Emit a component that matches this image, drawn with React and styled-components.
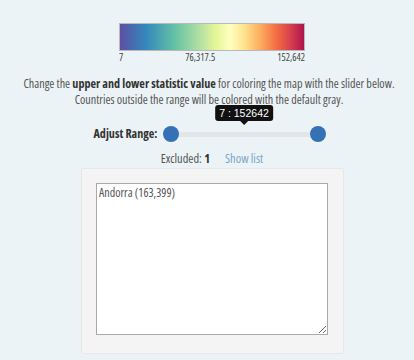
import React from "react";
import styled, { createGlobalStyle } from "styled-components";

const Global = createGlobalStyle`
  html, body { margin: 0; padding: 0; background: #ecf3f6; }
  body {
    font-family: "Open Sans", sans-serif;
    font-stretch: 80%;
    color: #555;
  }
`;

const Page = styled.div`
  width: 414px;
  height: 360px;
  display: flex;
  flex-direction: column;
  align-items: center;
  padding-top: 23px;
  box-sizing: border-box;
  overflow: hidden;
`;

const Legend = styled.div`
  width: 186px;
  margin-left: 10px;
  display: flex;
  flex-direction: column;
`;

const Bar = styled.div`
  height: 26px;
  border: 1px solid #b9b9b9;
  background: linear-gradient(
    to right,
    #5e4fa2 0%,
    #3288bd 14%,
    #66c2a5 30%,
    #abdda4 42%,
    #e6f598 52%,
    #ffffbf 60%,
    #fee08b 68%,
    #fdae61 76%,
    #f46d43 85%,
    #d53e4f 93%,
    #b0124c 100%
  );
`;

const Ticks = styled.div`
  display: flex;
  justify-content: space-between;
  font-size: 10px;
  color: #444;
  line-height: 11px;
  margin-top: 1px;
`;

const Help = styled.p`
  margin: 13px 0 0 4px;
  font-size: 12.1px;
  line-height: 16px;
  text-align: center;
  color: #555;
  white-space: nowrap;
  b { color: #333; font-weight: 700; }
`;

const SliderRow = styled.div`
  display: flex;
  align-items: center;
  gap: 5px;
  margin-top: 17px;
  margin-left: 5px;
`;

const Label = styled.span`
  font-size: 12.1px;
  font-weight: 700;
  color: #333;
`;

const Slider = styled.div`
  position: relative;
  width: 163px;
  height: 16px;
`;

const Track = styled.div`
  position: absolute;
  left: 8px;
  right: 8px;
  top: 6px;
  height: 5px;
  background: #e3e6e7;
  border-radius: 3px;
`;

const Handle = styled.div`
  position: absolute;
  top: 0;
  left: ${(p) => p.$left}px;
  width: 16px;
  height: 16px;
  border-radius: 50%;
  background: #3571b5;
`;

const Tip = styled.div`
  position: absolute;
  left: 50%;
  bottom: 21px;
  transform: translateX(-50%);
  background: #111;
  color: #fff;
  font-family: "Liberation Sans", Arial, sans-serif;
  font-stretch: normal;
  font-size: 10.5px;
  line-height: 14px;
  padding: 1px 4px;
  border-radius: 3px;
  white-space: nowrap;
  &::after {
    content: "";
    position: absolute;
    left: 50%;
    top: 100%;
    margin-left: -4px;
    border: 4px solid transparent;
    border-top-color: #111;
  }
`;

const Excluded = styled.div`
  display: flex;
  gap: 15px;
  margin-top: 10px;
  margin-left: 10px;
  font-size: 12.4px;
  line-height: 14px;
  color: #555;
  b { color: #333; }
`;

const Link = styled.a`
  color: #7aa4c8;
  text-decoration: none;
`;

const Panel = styled.div`
  margin-top: 2px;
  margin-left: 11px;
  width: 233px;
  padding: 14px 14px 18px;
  background: #f4f4f4;
  border: 1px solid #e6e8e9;
  border-radius: 2px;
`;

const Area = styled.textarea`
  display: block;
  width: 232px;
  height: 152px;
  box-sizing: border-box;
  border: 1px solid #a9a9a9;
  background: #fff;
  font-family: "Open Sans", sans-serif;
  font-stretch: 80%;
  font-size: 12px;
  line-height: 15px;
  color: #555;
  padding: 1px 2px;
  margin: 0;
  resize: both;
  outline: none;
`;

export default function App() {
  return (
    <>
      <Global />
      <Page>
        <Legend>
          <Bar />
          <Ticks>
            <span>7</span>
            <span>76,317.5</span>
            <span>152,642</span>
          </Ticks>
        </Legend>
        <Help>
          Change the <b>upper and lower statistic value</b> for coloring the map with the slider below.
          <br />
          Countries outside the range will be colored with the default gray.
        </Help>
        <SliderRow>
          <Label>Adjust Range:</Label>
          <Slider>
            <Track />
            <Handle $left={0} />
            <Handle $left={147} />
            <Tip>7 : 152642</Tip>
          </Slider>
        </SliderRow>
        <Excluded>
          <span>
            Excluded: <b>1</b>
          </span>
          <Link href="#">Show list</Link>
        </Excluded>
        <Panel>
          <Area defaultValue="Andorra (163,399)" />
        </Panel>
      </Page>
    </>
  );
}
